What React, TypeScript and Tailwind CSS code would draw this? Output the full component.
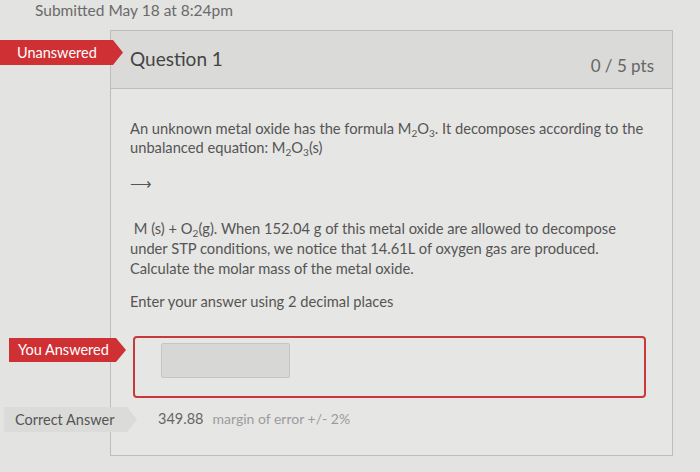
import React from "react";

function Badge({
	label,
	tone,
	className,
}: {
	label: string;
	tone: "red" | "gray";
	className: string;
}) {
	const red = tone === "red";
	return (
		<div className={`absolute ${className}`}>
			<div
				className={`flex h-full items-center text-[14.5px] ${
					red ? "bg-[#cf3034] text-white" : "bg-[#dbdbd9] text-[#555]"
				} [clip-path:polygon(0_0,calc(100%-10px)_0,100%_50%,calc(100%-10px)_100%,0_100%)]`}
			>
				{label}
			</div>
		</div>
	);
}

function Sub({ children }: { children: React.ReactNode }) {
	return (
		<span className="relative top-[3px] inline-block text-[10px] leading-none">
			{children}
		</span>
	);
}

export default function App() {
	return (
		<div
			className="relative h-[472px] w-[700px] overflow-hidden bg-[#e3e3e1] text-[#4a4a4a]"
			style={{ fontFamily: "Lato, 'Open Sans', sans-serif" }}
		>
			<div className="-mt-[1px] h-[31px] pl-[35px] text-[15.5px] leading-[22px] text-[#6a6a6a]">
				Submitted May 18 at 8:24pm
			</div>

			<div className="relative ml-[110px] w-[563px] border border-[#bdbdbb] bg-[#e6e6e4]">
				<Badge
					label="Unanswered"
					tone="red"
					className="-left-[111px] top-[9px] h-[25px] w-[123px] pl-0 [&>div]:pl-[17px]"
				/>
				<div className="flex h-[58px] items-center justify-between border-b border-[#bdbdbb] bg-[#dadad8] pl-[19px] pr-[18px]">
					<span className="text-[19px] text-[#444]">Question 1</span>
					<span className="mt-[12px] text-[17px] text-[#666]">0 / 5 pts</span>
				</div>

				<div className="pl-[19px] pr-[14px] pt-[30px] text-[14.7px] text-[#555]">
					<p className="leading-[19px]">
						An unknown metal oxide has the formula M<Sub>2</Sub>O<Sub>3</Sub>. It
						decomposes according to the unbalanced equation: M<Sub>2</Sub>O
						<Sub>3</Sub>(s)
					</p>
					<p className="mt-[16px] leading-[20px]">⟶</p>
					<p className="mt-[25px] pr-[20px] leading-[20px]">
						&nbsp;M (s) + O<Sub>2</Sub>(g). When 152.04 g of this metal oxide are
						allowed to decompose under STP conditions, we notice that 14.61L of
						oxygen gas are produced. Calculate the molar mass of the metal oxide.
					</p>
					<p className="mt-[13px] leading-[20px]">Enter your answer using 2 decimal places</p>
				</div>

				<div className="relative ml-[22px] mt-[25px] h-[62px] w-[513px] rounded-[4px] border-2 border-[#c9393a] pl-[26px] pt-[5px]">
					<div className="h-[35px] w-[129px] rounded-[2px] border border-[#c4c4c2] bg-[#d7d7d5]" />
				</div>
				<Badge
					label="You Answered"
					tone="red"
					className="-left-[102px] top-[307px] h-[24px] w-[117px] [&>div]:pl-[9px]"
				/>

				<div className="relative flex h-[57px] items-center pb-[16px] pl-[47px] text-[14.5px]">
					<span className="text-[#666]">349.88</span>
					<span className="ml-[9px] text-[14px] text-[#9c9c9c]">margin of error +/- 2%</span>
				</div>
				<Badge
					label="Correct Answer"
					tone="gray"
					className="-left-[107px] top-[376px] h-[25px] w-[133px] [&>div]:pl-[11px]"
				/>
			</div>
		</div>
	);
}
